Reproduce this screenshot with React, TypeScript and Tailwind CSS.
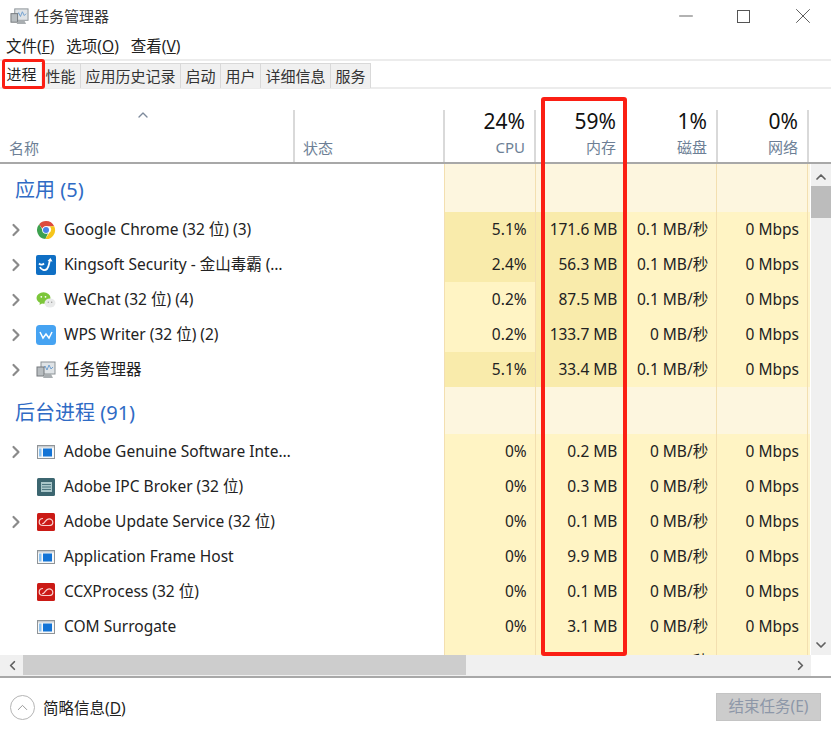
import { ChevronRight, ChevronUp, ChevronDown, ChevronLeft, Minus, X } from 'lucide-react'

type IconName = 'chrome' | 'kingsoft' | 'wechat' | 'wps' | 'taskmgr' | 'window' | 'ipc' | 'adobe'

interface Row {
  name: string
  icon?: IconName
  expand?: boolean
  cpu: string
  mem: string
  disk: string
  net: string
  hotCpu?: boolean
  hotMem?: boolean
}

const apps: Row[] = [
  { name: 'Google Chrome (32 位) (3)', icon: 'chrome', expand: true, cpu: '5.1%', mem: '171.6 MB', disk: '0.1 MB/秒', net: '0 Mbps', hotCpu: true, hotMem: true },
  { name: 'Kingsoft Security - 金山毒霸 (…', icon: 'kingsoft', expand: true, cpu: '2.4%', mem: '56.3 MB', disk: '0.1 MB/秒', net: '0 Mbps', hotCpu: true, hotMem: true },
  { name: 'WeChat (32 位) (4)', icon: 'wechat', expand: true, cpu: '0.2%', mem: '87.5 MB', disk: '0.1 MB/秒', net: '0 Mbps', hotMem: true },
  { name: 'WPS Writer (32 位) (2)', icon: 'wps', expand: true, cpu: '0.2%', mem: '133.7 MB', disk: '0 MB/秒', net: '0 Mbps', hotMem: true },
  { name: '任务管理器', icon: 'taskmgr', expand: true, cpu: '5.1%', mem: '33.4 MB', disk: '0.1 MB/秒', net: '0 Mbps', hotCpu: true, hotMem: true },
]

const background: Row[] = [
  { name: 'Adobe Genuine Software Inte…', icon: 'window', expand: true, cpu: '0%', mem: '0.2 MB', disk: '0 MB/秒', net: '0 Mbps' },
  { name: 'Adobe IPC Broker (32 位)', icon: 'ipc', cpu: '0%', mem: '0.3 MB', disk: '0 MB/秒', net: '0 Mbps' },
  { name: 'Adobe Update Service (32 位)', icon: 'adobe', expand: true, cpu: '0%', mem: '0.1 MB', disk: '0 MB/秒', net: '0 Mbps' },
  { name: 'Application Frame Host', icon: 'window', cpu: '0%', mem: '9.9 MB', disk: '0 MB/秒', net: '0 Mbps' },
  { name: 'CCXProcess (32 位)', icon: 'adobe', cpu: '0%', mem: '0.1 MB', disk: '0 MB/秒', net: '0 Mbps' },
  { name: 'COM Surrogate', icon: 'window', cpu: '0%', mem: '3.1 MB', disk: '0 MB/秒', net: '0 Mbps' },
]

const tabs = ['性能', '应用历史记录', '启动', '用户', '详细信息', '服务']

function TaskIcon({ size = 20 }: { size?: number }) {
  return (
    <svg width={size} height={size} viewBox="0 0 20 20">
      <rect x="5" y="2" width="14" height="12" fill="#dfe3e6" stroke="#8b9296" />
      <path d="M7 9l2-3 2 4 2-5 2 4 2-2" fill="none" stroke="#6f9fd0" strokeWidth="1" />
      <rect x="1" y="7" width="7" height="9" fill="#b8bdc0" stroke="#74797c" />
      <path d="M9 14h6l2 4H7z" fill="#a9aeb1" />
    </svg>
  )
}

function ProcIcon({ name }: { name: IconName }) {
  if (name === 'chrome') {
    return (
      <svg width="20" height="20" viewBox="0 0 20 20">
        <path d="M10 1a9 9 0 0 1 8.200 5.200H10a3.900 3.900 0 0 0-3.700 2.600L3.200 4.200A9 9 0 0 1 10 1z" fill="#dd4b3e" />
        <path d="M18.200 6.200A9 9 0 0 1 9.300 19l4-6.200a3.900 3.900 0 0 0 .1-6.600z" fill="#f6c51b" />
        <path d="M9.300 19A9 9 0 0 1 3.200 4.200l3.900 6.900a3.900 3.900 0 0 0 5.200 1.700z" fill="#3da14f" />
        <circle cx="10" cy="10" r="3.800" fill="#fff" />
        <circle cx="10" cy="10" r="3" fill="#4a83e8" />
      </svg>
    )
  }
  if (name === 'kingsoft') {
    return (
      <svg width="20" height="20" viewBox="0 0 20 20">
        <rect x="0" y="0" width="20" height="20" rx="2" fill="#0f6fc4" />
        <path d="M3 8.500c1.500 1.500 3.500 1.500 5 0M4 12c1 3 5 4 7 2s2-6 3-9" fill="none" stroke="#fff" strokeWidth="1.800" />
        <path d="M11.500 6l3-3 2 3.500z" fill="#fff" />
      </svg>
    )
  }
  if (name === 'wechat') {
    return (
      <svg width="20" height="20" viewBox="0 0 20 20">
        <ellipse cx="7.500" cy="8" rx="7" ry="5.800" fill="#7cc63a" />
        <path d="M4 12l-.5 3 3-2z" fill="#7cc63a" />
        <circle cx="5.300" cy="6.800" r=".9" fill="#fff" />
        <circle cx="9.500" cy="6.800" r=".9" fill="#fff" />
        <ellipse cx="14" cy="13" rx="5.500" ry="4.500" fill="#e9eaea" />
        <circle cx="12.300" cy="12.300" r=".7" fill="#9a9a9a" />
        <circle cx="15.700" cy="12.300" r=".7" fill="#9a9a9a" />
      </svg>
    )
  }
  if (name === 'wps') {
    return (
      <svg width="20" height="20" viewBox="0 0 20 20">
        <rect x="0" y="0" width="20" height="20" rx="3.500" fill="#46a3f2" />
        <path d="M4 7l3 6 3-4 3 4 3-6" fill="none" stroke="#fff" strokeWidth="1.500" />
      </svg>
    )
  }
  if (name === 'taskmgr') return <TaskIcon />
  if (name === 'window') {
    return (
      <svg width="20" height="20" viewBox="0 0 20 20">
        <rect x="1.500" y="3.500" width="17" height="13" fill="#f7f8f9" stroke="#8f9498" />
        <rect x="2" y="4" width="16" height="1.500" fill="#c8ccd0" />
        <rect x="3" y="6.500" width="2.500" height="8" fill="#8fc3ef" />
        <rect x="7" y="6.500" width="9" height="8" fill="#1374d6" />
      </svg>
    )
  }
  if (name === 'ipc') {
    return (
      <svg width="20" height="20" viewBox="0 0 20 20">
        <rect x="1" y="1" width="18" height="18" rx="1.500" fill="#3c6670" />
        <rect x="5" y="5" width="11" height="10" fill="#a9c6c9" />
        <path d="M6 7.500h9M6 10h9M6 12.500h9" stroke="#4d7680" strokeWidth="1" />
      </svg>
    )
  }
  return (
    <svg width="20" height="20" viewBox="0 0 20 20">
      <rect x="1" y="1" width="18" height="18" rx="1.500" fill="#cb1a15" />
      <path d="M7 6.500c-2.500 0-3.800 1.700-3.800 3.500s1.300 3.500 3.800 3.500h6c2.300 0 3.800-1.500 3.800-3.300S15.300 6.800 13 6.800c-2.500 0-3.500 2.200-4.500 3.500-.8 1-1.500 1.500-2.300 1.200" fill="none" stroke="#f7d2cf" strokeWidth="1.200" />
    </svg>
  )
}

function GroupRow({ label, heightClass }: { label: string; heightClass: string }) {
  return (
    <div className={`flex ${heightClass}`}>
      <div className="w-[443px] pl-[13px] pt-[13px] text-[20px] leading-[26px] text-[#2f6bc5]">{label}</div>
      <div className="w-[91px] border-l border-[#f3dfb0] bg-[#fdf6df]" />
      <div className="w-[91px] border-l border-[#f3dfb0] bg-[#fdf6df]" />
      <div className="w-[91px] border-l border-[#f3dfb0] bg-[#fdf6df]" />
      <div className="w-[91px] border-l border-[#f3dfb0] bg-[#fdf6df]" />
      <div className="w-[3px] border-l border-[#f3dfb0] bg-[#fdf6df]" />
    </div>
  )
}

function ProcRow({ row }: { row: Row }) {
  return (
    <div className="flex h-[35px] text-[15.500px] leading-[35px] text-[#222]">
      <div className="flex w-[443px] items-center">
        <div className="flex w-[34px] shrink-0 justify-start pl-[4px]">
          {row.expand && <ChevronRight size={20} strokeWidth={2.600} className="text-[#8a8a8a]" />}
        </div>
        <div className="flex w-[28px] shrink-0 justify-start">
          {row.icon && <ProcIcon name={row.icon} />}
        </div>
        <span className="whitespace-nowrap">{row.name}</span>
      </div>
      <div className={`w-[91px] border-l border-[#f3dfb0] pr-[8px] text-right ${row.hotCpu ? 'bg-[#f9ebab]' : 'bg-[#fff4c4]'}`}>{row.cpu}</div>
      <div className={`w-[91px] border-l border-[#f3dfb0] pr-[8px] text-right ${row.hotMem ? 'bg-[#f9ebab]' : 'bg-[#fff4c4]'}`}>{row.mem}</div>
      <div className="w-[91px] border-l border-[#f3dfb0] bg-[#fff4c4] pr-[8px] text-right">{row.disk}</div>
      <div className="w-[91px] border-l border-[#f3dfb0] bg-[#fff4c4] pr-[8px] text-right">{row.net}</div>
      <div className="w-[3px] border-l border-[#f3dfb0] bg-[#fff4c4]" />
    </div>
  )
}

function MetricHead({ value, label }: { value: string; label: string }) {
  return (
    <div className="w-[91px] border-l-2 border-[#d9d9d9] pr-[9px] text-right">
      <div className="-mt-[1px] text-[21px] leading-[24px] text-[#111]">{value}</div>
      <div className="pt-[4px] text-[15px] leading-[20px] text-[#6d7f96]">{label}</div>
    </div>
  )
}

export default function App() {
  return (
    <div className="relative flex h-[738px] w-[831px] flex-col overflow-hidden bg-white font-['Noto_Sans','Noto_Sans_CJK_SC',sans-serif] text-[#222]">
      <div className="flex h-[34px] items-center pb-[2px] pl-[10px]">
        <TaskIcon size={19} />
        <span className="ml-[5px] text-[15px] text-[#333]">任务管理器</span>
        <div className="ml-auto flex items-center gap-[40px] pr-[15px] text-[#444]">
          <Minus size={22} strokeWidth={0.900} />
          <div className="h-[13px] w-[13px] border-[1.500px] border-[#555]" />
          <X size={26} strokeWidth={0.800} />
        </div>
      </div>

      <div className="flex h-[25px] items-center gap-[12px] pl-[6px] text-[15.500px] text-[#222]">
        <span>文件(<span className="underline">F</span>)</span>
        <span>选项(<span className="underline">O</span>)</span>
        <span>查看(<span className="underline">V</span>)</span>
      </div>

      <div className="flex h-[30px] items-end border-t-2 border-b-2 border-[#ececec] pl-[2px]">
        <div className="flex h-[25px] w-[39px] items-center justify-center bg-white text-[15px]">进程</div>
        {tabs.map((t) => (
          <div key={t} className="-mb-[1px] flex h-[25px] items-center border-r border-t border-[#d9d9d9] bg-[#f0f0f0] px-[4.500px] text-[15px] text-[#333]">
            {t}
          </div>
        ))}
      </div>

      <div className="mt-[21px] flex h-[54px] border-b-2 border-[#a8a8a8] pl-[2px]">
        <div className="relative w-[291px] pl-[7px]">
          <ChevronUp size={16} strokeWidth={2} className="absolute left-[133px] -top-[3px] text-[#7d8a9c]" />
          <div className="pt-[28px] text-[15px] leading-[20px] text-[#6d7f96]">名称</div>
        </div>
        <div className="w-[150px] border-l-2 border-[#d9d9d9] pl-[8px]">
          <div className="pt-[28px] text-[15px] leading-[20px] text-[#6d7f96]">状态</div>
        </div>
        <MetricHead value="24%" label="CPU" />
        <MetricHead value="59%" label="内存" />
        <MetricHead value="1%" label="磁盘" />
        <MetricHead value="0%" label="网络" />
        <div className="border-l-2 border-[#d9d9d9]" />
      </div>

      <div className="flex h-[491px] pl-[2px]">
        <div className="h-full w-[808px] shrink-0 overflow-hidden">
          <GroupRow label="应用 (5)" heightClass="h-[48px]" />
          {apps.map((r) => (
            <ProcRow key={r.name} row={r} />
          ))}
          <GroupRow label="后台进程 (91)" heightClass="h-[47px]" />
          {background.map((r) => (
            <ProcRow key={r.name} row={r} />
          ))}
          <ProcRow row={{ name: '', cpu: '', mem: '', disk: '0 MB/秒', net: '' }} />
        </div>
        <div className="ml-[1px] flex w-[20px] flex-col items-center bg-[#f0f0f0]">
          <ChevronUp size={16} strokeWidth={2.600} className="mt-[5px] text-[#606060]" />
          <div className="mt-[1px] h-[32px] w-full bg-[#bcbcbc]" />
          <div className="flex-1" />
          <ChevronDown size={16} strokeWidth={2.600} className="mb-[2px] text-[#606060]" />
        </div>
      </div>

      <div className="flex h-[21px] w-[811px] items-center bg-[#f0f0f0] pl-[2px]">
        <ChevronLeft size={15} strokeWidth={2.800} className="ml-[3px] text-[#606060]" />
        <div className="ml-[3px] h-[20px] w-[443px] self-start bg-[#cdcdcd]" />
        <ChevronRight size={15} strokeWidth={2.800} className="ml-auto mr-[3px] text-[#606060]" />
      </div>

      <div className="flex flex-1 items-start border-t-2 border-[#a8a8a8]">
        <div className="ml-[10px] mt-[17px] flex h-[25px] w-[25px] items-center justify-center rounded-full border border-[#b5b5b5]">
          <ChevronUp size={17} strokeWidth={1.200} className="text-[#888]" />
        </div>
        <span className="ml-[8px] mt-[19px] text-[15.500px] leading-[22px] text-[#222]">
          简略信息(<span className="underline">D</span>)
        </span>
        <div className="ml-auto mr-[10px] mt-[15px] flex h-[28px] w-[105px] items-center justify-center border border-[#c4c4c4] bg-[#cccccc] text-[15.500px] text-[#8d97a8]">
          结束任务(E)
        </div>
      </div>

      <div className="absolute left-[2px] top-[59px] h-[30px] w-[43px] rounded-[3px] border-[3px] border-[#fb1f14]" />
      <div className="absolute left-[541px] top-[97px] h-[559px] w-[86px] rounded-[3px] border-4 border-[#fb1f14]" />
    </div>
  )
}
